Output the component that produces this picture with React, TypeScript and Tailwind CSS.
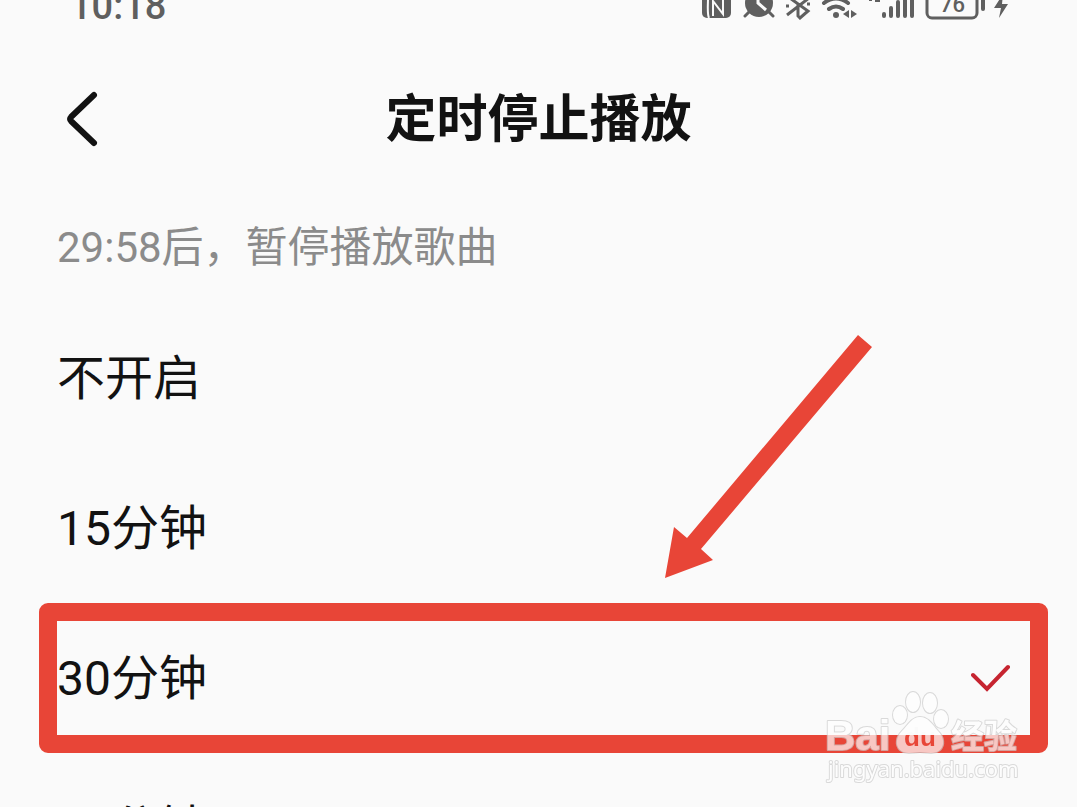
import React from 'react';

const options = ['不开启', '15分钟', '30分钟', '45分钟'];
const selected = '30分钟';

const StatusBar: React.FC = () => (
  <div className="flex h-5 items-end justify-between overflow-hidden pl-[70px] pr-16 text-[#5f5f5f]">
    <span className="text-[38px] font-medium leading-7">10:18</span>
    <svg width="318" height="20" viewBox="0 0 318 20" fill="none" aria-hidden="true">
      {/* NFC */}
      <rect x="7" y="-11" width="29" height="29" rx="5" fill="currentColor" />
      <path d="M14 18 C12 14 13 6 13 -2 M18 16 V1 L28 14 V-2" stroke="#fafafa" strokeWidth="2" />
      {/* alarm */}
      <circle cx="64" cy="3" r="14" fill="currentColor" />
      <path d="M54 12 L50 16 M74 12 L78 16" stroke="currentColor" strokeWidth="3" strokeLinecap="round" />
      <path d="M63 -4 V3 L71 10" stroke="#fafafa" strokeWidth="3" />
      {/* bluetooth */}
      <path d="M92 15 L114 -2 M92 -4 L113 11 L105 18 L103 16 V3" stroke="currentColor" strokeWidth="3" />
      <path d="M91 6 H94 M112 4 H115" stroke="currentColor" strokeWidth="3" />
      {/* wifi */}
      <path d="M129 3 Q141 -6 153 3 M134 9 Q141 4 148 9" stroke="currentColor" strokeWidth="4" strokeLinecap="round" />
      <circle cx="141" cy="15" r="3" fill="currentColor" />
      <path d="M154 10 V18 L148 14Z M156 10 V18 L162 14Z" fill="currentColor" />
      {/* signal */}
      <path d="M174 0 H177 M180 1 H185" stroke="currentColor" strokeWidth="2" />
      <path d="M189 14 V16 M196 8 V16 M203 2 V16 M210 -4 V16 M217 -8 V16" stroke="currentColor" strokeWidth="4" strokeLinecap="round" />
      {/* battery */}
      <rect x="232" y="-12" width="50" height="30" rx="5" stroke="currentColor" strokeWidth="3" />
      <path d="M288 -4 V9" stroke="currentColor" strokeWidth="4" strokeLinecap="round" />
      <text x="245" y="12" fontSize="22" fontWeight="500" fill="currentColor">76</text>
      <path d="M308 -6 L299 8 H306 L304 18 L313 4 H307Z" fill="currentColor" />
    </svg>
  </div>
);

const Arrow: React.FC = () => (
  <svg
    className="pointer-events-none absolute bottom-full right-[204px] mb-6"
    width="208"
    height="244"
    viewBox="0 0 208 244"
    aria-hidden="true"
  >
    <path d="M193 0 L207 12 L36 214 L48 225 L0 243 L9 192 L22 203Z" fill="#e84537" />
  </svg>
);

const Watermark: React.FC = () => (
  <svg
    className="pointer-events-none absolute -bottom-8 right-[52px] z-10"
    width="205"
    height="100"
    viewBox="0 0 205 100"
    aria-hidden="true"
  >
    <mask id="paw">
      <rect width="205" height="100" fill="white" />
      <text x="84" y="61" fontSize="26" fontWeight="700" fontFamily="Liberation Sans" fill="black">du</text>
    </mask>
    <g fill="#ffffff" stroke="#cccccc" strokeWidth="2" opacity="0.7" paintOrder="stroke" strokeLinejoin="round">
      <g mask="url(#paw)">
        <path d="M100 32 C108 32 112 39 118 46 C124 52 125 60 120 65 C114 70 106 67 100 67 C94 67 86 70 80 65 C75 60 76 52 82 46 C88 40 92 32 100 32Z" />
      </g>
      <ellipse cx="93" cy="17" rx="7" ry="10" />
      <ellipse cx="110" cy="18" rx="7" ry="10" />
      <ellipse cx="80" cy="30" rx="7" ry="9" />
      <ellipse cx="121" cy="34" rx="7" ry="9" />
      <text x="5" y="65" fontSize="42" fontWeight="700" fontFamily="Liberation Sans">Bai</text>
      <text x="131" y="63" fontSize="33" fontWeight="700" fontFamily="Noto Sans CJK SC">经验</text>
      <text x="8" y="92" fontSize="22" fontFamily="Noto Sans">jingyan.baidu.com</text>
    </g>
  </svg>
);

export default function App() {
  return (
    <div className="h-screen overflow-hidden bg-[#fafafa] font-[Roboto,'Noto_Sans_CJK_SC',sans-serif] text-[#121212]">
      <StatusBar />

      <header className="grid h-[197px] grid-cols-[1fr_auto_1fr] items-center px-14">
        <button type="button" aria-label="返回" className="w-[50px]">
          <svg width="50" height="60" viewBox="0 0 50 60" fill="none">
            <path d="M38 6 L15 28 Q13 30 15 32 L38 54" stroke="currentColor" strokeWidth="6" strokeLinecap="round" />
          </svg>
        </button>
        <h1 className="pt-0.5 text-[51px] font-bold leading-[60px]">定时停止播放</h1>
      </header>

      <p className="mb-6 px-[57px] text-[42px] leading-[62px] text-[#8b8b8b]">29:58后，暂停播放歌曲</p>

      <ul>
        {options.map((option) => (
          <li key={option} className="relative">
            <button
              type="button"
              aria-pressed={option === selected}
              className="flex h-[150px] w-full items-center justify-between pl-[57px] pr-[66px] text-[48px]"
            >
              <span className="pt-0.5 leading-[60px]">{option}</span>
              {option === selected && (
                <svg width="40" height="28" viewBox="0 0 40 28" fill="none" aria-hidden="true">
                  <path d="M2 11 L16 25 L37 3" stroke="#c62430" strokeWidth="4" strokeLinecap="round" />
                </svg>
              )}
            </button>
            {option === selected && (
              <>
                <div className="pointer-events-none absolute inset-y-0 left-[39px] right-[29px] rounded-[9px] border-[18px] border-[#e84537]" />
                <Arrow />
                <Watermark />
              </>
            )}
          </li>
        ))}
      </ul>
    </div>
  );
}
